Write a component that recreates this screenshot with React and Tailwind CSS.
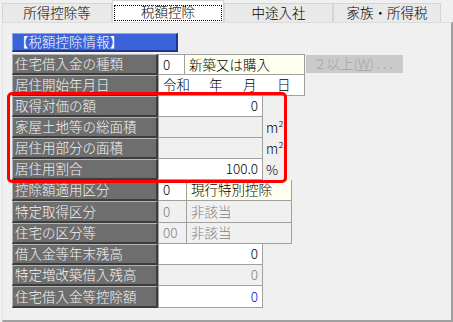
import React from 'react';

// Classic Windows-style form: tab strip + bevelled label grid
const FONT = "font-['Noto_Sans_CJK_JP',sans-serif]";

const Tab = ({ label, active, w }) =>
  active ? (
    <div className={`relative flex h-[22px] shrink-0 items-center justify-center border border-b-0 border-[#d4d4d4] bg-white ${w}`}>
      <div className="absolute inset-x-[1px] top-[4px] bottom-[1px] border border-dotted border-black" />
      <span className="relative pt-[1px]">{label}</span>
    </div>
  ) : (
    <div className={`mt-[3px] flex h-[19px] shrink-0 items-center justify-center border border-b-0 border-[#d4d4d4] bg-[#e9e9e9] ${w}`}>
      {label}
    </div>
  );

const Label = ({ children }) => (
  <div className="flex h-full w-[146px] shrink-0 items-center border-t border-l border-t-[#b4b4b4] border-l-[#b4b4b4] border-b-2 border-r-2 border-b-[#3c3c3c] border-r-[#3c3c3c] bg-[#6e6e6e] pl-[2px] text-[#f4f4f4]">
    {children}
  </div>
);

const tones = {
  white: 'bg-white text-black',
  ivory: 'bg-[#fffff0] text-black',
  off: 'bg-[#f0f0f0] text-[#808080]',
  blue: 'bg-white text-[#0000ff]',
};

const Cell = ({ w, tone = 'white', right, first, top, children }) => (
  <div
    className={`flex h-full shrink-0 items-center border-r border-b border-[#a0a0a0] ${w} ${tones[tone]} ${
      first ? 'border-l' : ''
    } ${top ? 'border-t' : ''} ${right ? 'justify-end pr-[4px]' : 'pl-[4px]'}`}
  >
    {children}
  </div>
);

const Unit = ({ children }) => (
  <div className="flex h-full w-[27px] items-center pl-[3px] text-black">{children}</div>
);

export default function App() {
  return (
    <div className={`relative h-[322px] w-[453px] overflow-hidden bg-[#f0f0f0] text-[13.5px] font-light leading-none ${FONT}`}>
      {/* tab strip */}
      <div className="flex h-[22px] pl-[2px] text-black">
        <Tab label="所得控除等" w="w-[110px]" />
        <Tab label="税額控除" w="w-[112px]" active />
        <Tab label="中途入社" w="w-[109px]" />
        <Tab label="家族・所得税" w="w-[108px]" />
      </div>

      {/* panel */}
      <div className="ml-[2px] h-[300px] w-[451px] border-t border-l border-t-[#dcdcdc] border-l-[#e4e4e4] border-r-2 border-b-2 border-r-[#a0a0a0] border-b-[#a0a0a0] pt-[10px] pl-[9px]">
        <div className="flex h-[19px] w-[166px] items-center border-t border-l border-t-[#8aa4f4] border-l-[#8aa4f4] border-b-2 border-r-2 border-b-[#1c3690] border-r-[#1c3690] bg-[#3a62da] pl-[2px] text-white">
          【税額控除情報】
        </div>

        <div className="mt-[2px] flex flex-col">
          <div className="flex h-[21px]">
            <Label>住宅借入金の種類</Label>
            <Cell w="w-[27px]" first top>0</Cell>
            <Cell w="w-[120px]" tone="ivory" top>新築又は購入</Cell>
            <div className="ml-[1px] mt-[1px] flex h-[18px] w-[97px] items-center justify-center bg-[#cacaca] text-[13.5px] text-[#a4a4a4]">
              ２以上(<span className="underline">W</span>)<span className="tracking-[3px] pl-[3px]">...</span>
            </div>
          </div>
          <div className="flex h-[21px]">
            <Label>居住開始年月日</Label>
            <Cell w="w-[147px]" first>
              <span className="w-[46px]">令和</span>
              <span className="w-[34px]">年</span>
              <span className="w-[34px]">月</span>
              <span>日</span>
            </Cell>
          </div>
          <div className="flex h-[21px]">
            <Label>取得対価の額</Label>
            <Cell w="w-[105px]" first right>0</Cell>
          </div>
          <div className="flex h-[21px]">
            <Label>家屋土地等の総面積</Label>
            <Cell w="w-[105px]" tone="off" first right />
            <Unit>m²</Unit>
          </div>
          <div className="flex h-[21px]">
            <Label>居住用部分の面積</Label>
            <Cell w="w-[105px]" tone="off" first right />
            <Unit>m²</Unit>
          </div>
          <div className="flex h-[21px]">
            <Label>居住用割合</Label>
            <Cell w="w-[105px]" first right>100.0</Cell>
            <Unit>%</Unit>
          </div>
          <div className="flex h-[21px]">
            <Label>控除額適用区分</Label>
            <Cell w="w-[29px]" first>0</Cell>
            <Cell w="w-[105px]" tone="ivory">現行特別控除</Cell>
          </div>
          <div className="flex h-[22px]">
            <Label>特定取得区分</Label>
            <Cell w="w-[29px]" tone="off" first>0</Cell>
            <Cell w="w-[105px]" tone="off">非該当</Cell>
          </div>
          <div className="flex h-[21px]">
            <Label>住宅の区分等</Label>
            <Cell w="w-[29px]" tone="off" first>00</Cell>
            <Cell w="w-[105px]" tone="off">非該当</Cell>
          </div>
          <div className="flex h-[21px]">
            <Label>借入金等年末残高</Label>
            <Cell w="w-[105px]" first right>0</Cell>
          </div>
          <div className="flex h-[21px]">
            <Label>特定増改築借入残高</Label>
            <Cell w="w-[105px]" tone="off" first right>0</Cell>
          </div>
          <div className="flex h-[22px]">
            <Label>住宅借入金等控除額</Label>
            <Cell w="w-[105px]" tone="blue" first right>0</Cell>
          </div>
        </div>
      </div>

      {/* red highlight overlay */}
      <div className="pointer-events-none absolute top-[92px] left-[7px] h-[91px] w-[280px] rounded-[5px] border-[3px] border-[#ff0000]" />
    </div>
  );
}
